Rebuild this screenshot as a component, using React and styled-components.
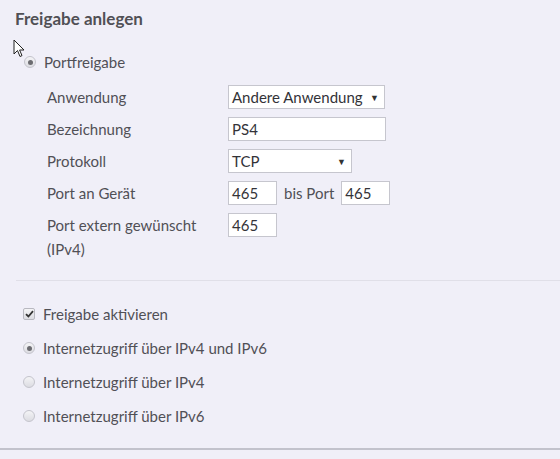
import React from "react";
import styled, { createGlobalStyle } from "styled-components";

const Global = createGlobalStyle`
  html, body { margin: 0; padding: 0; background: #f0eff8; }
  body { font-family: "Lato", "Open Sans", sans-serif; color: #505056; }
  * { box-sizing: border-box; }
`;

const Page = styled.div`
  width: 560px;
  height: 459px;
  position: relative;
  overflow: hidden;
  background: #f0eff8;
`;

const Title = styled.h2`
  margin: 0;
  padding: 9px 0 0 15px;
  font-size: 17px;
  font-weight: 700;
  color: #505055;
  line-height: 20px;
`;

const Section = styled.div`
  padding: 23px 0 0 24px;
`;

const OptionRow = styled.label`
  display: flex;
  align-items: center;
  gap: 8px;
  height: 20px;
  font-size: 15px;
`;

const Radio = styled.span`
  width: 12px;
  height: 12px;
  border-radius: 50%;
  border: 1px solid #c4c4cc;
  background: linear-gradient(#f4f4f6, #dcdce2);
  display: flex;
  align-items: center;
  justify-content: center;
  flex-shrink: 0;
  &::after {
    content: "";
    display: ${(p) => (p.$checked ? "block" : "none")};
    width: 5px;
    height: 5px;
    border-radius: 50%;
    background: #6b6b70;
  }
`;

const Check = styled.span`
  width: 12px;
  height: 12px;
  border-radius: 2px;
  border: 1px solid #b8b8c0;
  background: linear-gradient(#f4f4f6, #dcdce2);
  display: flex;
  align-items: center;
  justify-content: center;
  flex-shrink: 0;
`;

const Form = styled.div`
  display: grid;
  grid-template-columns: 181px auto;
  row-gap: 8px;
  padding: 13px 0 0 47px;
  font-size: 15px;
`;

const Label = styled.div`
  line-height: 24px;
`;

const Field = styled.div`
  display: flex;
  align-items: center;
  gap: 7px;
  height: 24px;
`;

const Box = styled.div`
  width: ${(p) => p.$w}px;
  height: 24px;
  border: 1px solid #c6c6ce;
  background: #ffffff;
  padding: 0 5px 0 3px;
  display: flex;
  align-items: center;
  justify-content: space-between;
  color: #333338;
  font-size: 15px;
  white-space: nowrap;
`;

const Arrow = styled.span`
  font-size: 9px;
  color: #333;
`;

const Divider = styled.hr`
  margin: 19px 0 0 16px;
  border: none;
  border-top: 1px solid #e0dfe8;
`;

const Options = styled.div`
  padding: 23px 0 0 23px;
  display: flex;
  flex-direction: column;
  gap: 14px;
`;

const BottomLine = styled.div`
  position: absolute;
  left: 0;
  right: 0;
  top: 448px;
  height: 2px;
  background: #c2c2cc;
`;

const Cursor = styled.svg`
  position: absolute;
  left: 13px;
  top: 39px;
`;

export default function App() {
  return (
    <Page>
      <Global />
      <Title>Freigabe anlegen</Title>
      <Cursor width="14" height="20" viewBox="0 0 14 20">
        <path d="M1 1 L1 15 L4.5 11.5 L7 17.5 L9 16.6 L6.6 11 L11 11 Z" fill="#fff" stroke="#222" strokeWidth="1" strokeLinejoin="round" />
      </Cursor>
      <Section>
        <OptionRow>
          <Radio $checked />
          Portfreigabe
        </OptionRow>
      </Section>
      <Form>
        <Label>Anwendung</Label>
        <Field>
          <Box $w={157}>Andere Anwendung <Arrow>▼</Arrow></Box>
        </Field>
        <Label>Bezeichnung</Label>
        <Field>
          <Box $w={158}>PS4</Box>
        </Field>
        <Label>Protokoll</Label>
        <Field>
          <Box $w={124}>TCP <Arrow>▼</Arrow></Box>
        </Field>
        <Label>Port an Gerät</Label>
        <Field>
          <Box $w={49}>465</Box>
          <span>bis Port</span>
          <Box $w={49}>465</Box>
        </Field>
        <Label>Port extern gewünscht<br />(IPv4)</Label>
        <Field>
          <Box $w={49}>465</Box>
        </Field>
      </Form>
      <Divider />
      <Options>
        <OptionRow>
          <Check>
            <svg width="9" height="8" viewBox="0 0 9 8">
              <path d="M1 4.2 L3.4 6.5 L8 1.2" fill="none" stroke="#333" strokeWidth="1.8" />
            </svg>
          </Check>
          Freigabe aktivieren
        </OptionRow>
        <OptionRow>
          <Radio $checked />
          Internetzugriff über IPv4 und IPv6
        </OptionRow>
        <OptionRow>
          <Radio />
          Internetzugriff über IPv4
        </OptionRow>
        <OptionRow>
          <Radio />
          Internetzugriff über IPv6
        </OptionRow>
      </Options>
      <BottomLine />
    </Page>
  );
}
